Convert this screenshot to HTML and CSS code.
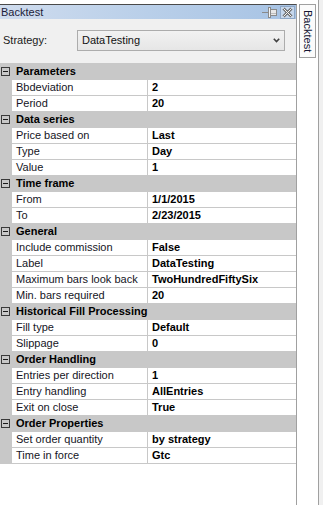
FILE: index.html
```html
<!DOCTYPE html>
<html>
<head>
<meta charset="utf-8">
<link rel="stylesheet" href="styles.css">
</head>
<body>
<div class="app">
  <div class="panel">
    <div class="titlebar">
      <span class="title">Backtest</span>
      <svg class="pin" width="15" height="11" viewBox="0 0 15 11">
        <line x1="0" y1="5.5" x2="6" y2="5.5" stroke="#8a8a8a" stroke-width="1"/>
        <rect x="6.5" y="0.5" width="2" height="10" fill="#f4f4f4" stroke="#8a8a8a"/>
        <rect x="8.5" y="2.5" width="6" height="6" fill="#e8e8e8" stroke="#8a8a8a"/>
        <line x1="9" y1="6.5" x2="14" y2="6.5" stroke="#bdbdbd"/>
      </svg>
      <div class="close">
        <svg width="13" height="11" viewBox="0 0 13 11">
          <line x1="2.5" y1="1.5" x2="10.5" y2="9.5" stroke="#707070" stroke-width="3"/>
          <line x1="10.5" y1="1.5" x2="2.5" y2="9.5" stroke="#707070" stroke-width="3"/>
          <line x1="2.5" y1="1.5" x2="10.5" y2="9.5" stroke="#f4f4f4" stroke-width="1"/>
          <line x1="10.5" y1="1.5" x2="2.5" y2="9.5" stroke="#f4f4f4" stroke-width="1"/>
        </svg>
      </div>
    </div>
    <div class="strategy">
      <span class="label">Strategy:</span>
      <div class="combo">
        <span>DataTesting</span>
        <svg class="chev" width="7" height="5" viewBox="0 0 7 5">
          <path d="M0.8 0.8 L3.5 3.6 L6.2 0.8" fill="none" stroke="#404040" stroke-width="1.6"/>
        </svg>
      </div>
    </div>
    <div class="grid">
      <div class="cat"><span class="tog"></span>Parameters</div>
      <div class="prop"><span class="name">Bbdeviation</span><span class="val">2</span></div>
      <div class="prop"><span class="name">Period</span><span class="val">20</span></div>
      <div class="cat"><span class="tog"></span>Data series</div>
      <div class="prop"><span class="name">Price based on</span><span class="val">Last</span></div>
      <div class="prop"><span class="name">Type</span><span class="val">Day</span></div>
      <div class="prop"><span class="name">Value</span><span class="val">1</span></div>
      <div class="cat"><span class="tog"></span>Time frame</div>
      <div class="prop"><span class="name">From</span><span class="val">1/1/2015</span></div>
      <div class="prop"><span class="name">To</span><span class="val">2/23/2015</span></div>
      <div class="cat"><span class="tog"></span>General</div>
      <div class="prop"><span class="name">Include commission</span><span class="val">False</span></div>
      <div class="prop"><span class="name">Label</span><span class="val">DataTesting</span></div>
      <div class="prop"><span class="name">Maximum bars look back</span><span class="val">TwoHundredFiftySix</span></div>
      <div class="prop"><span class="name">Min. bars required</span><span class="val">20</span></div>
      <div class="cat"><span class="tog"></span>Historical Fill Processing</div>
      <div class="prop"><span class="name">Fill type</span><span class="val">Default</span></div>
      <div class="prop"><span class="name">Slippage</span><span class="val">0</span></div>
      <div class="cat"><span class="tog"></span>Order Handling</div>
      <div class="prop"><span class="name">Entries per direction</span><span class="val">1</span></div>
      <div class="prop"><span class="name">Entry handling</span><span class="val">AllEntries</span></div>
      <div class="prop"><span class="name">Exit on close</span><span class="val">True</span></div>
      <div class="cat"><span class="tog"></span>Order Properties</div>
      <div class="prop"><span class="name">Set order quantity</span><span class="val">by strategy</span></div>
      <div class="prop"><span class="name">Time in force</span><span class="val">Gtc</span></div>
    </div>
  </div>
  <div class="side">
    <div class="tab"><span>Backtest</span></div>
  </div>
  <div class="edge"></div>
</div>
</body>
</html>
```

FILE: styles.css
```css
html, body {
  margin: 0;
  padding: 0;
}
body {
  background: #ffffff;
  font-family: "Liberation Sans", Arial, sans-serif;
  font-size: 11px;
  color: #111;
}
.app {
  display: flex;
  height: 505px;
  overflow: hidden;
}
.panel {
  width: 296px;
  margin-top: 4px;
  border-top: 1px solid #4a4a4a;
  border-right: 1px solid #a0a0a0;
  display: flex;
  flex-direction: column;
  background: #ffffff;
}
.titlebar {
  height: 14px;
  display: flex;
  align-items: center;
  padding-left: 1px;
  background: linear-gradient(to right, #cfdcee, #b9cfe9 50%, #a7c3e4);
}
.title {
  color: #1c1c3a;
  line-height: 14px;
}
.pin {
  margin-left: auto;
  margin-top: 1px;
}
.close {
  width: 13px;
  height: 11px;
  margin-left: 3px;
  margin-right: 1px;
  margin-top: 1px;
  border: 1px solid #8ea7c6;
  background: #c6d7ec;
  display: flex;
}
.strategy {
  height: 44px;
  box-sizing: border-box;
  background: #f0f0f0;
  display: flex;
  align-items: center;
  padding: 0 0 2px 3px;
}
.label {
  width: 74px;
  color: #1a1a1a;
}
.combo {
  width: 202px;
  height: 19px;
  border: 1px solid #acacac;
  background: linear-gradient(#f2f2f2, #e6e6e6);
  display: flex;
  align-items: center;
  padding-left: 4px;
  box-sizing: content-box;
}
.combo span {
  color: #111;
}
.chev {
  margin-left: auto;
  margin-right: 4px;
}
.grid {
  display: flex;
  flex-direction: column;
  border-bottom: 1px solid #c8c8c8;
}
.cat {
  height: 16px;
  box-sizing: border-box;
  background: #c8c8c8;
  display: flex;
  align-items: center;
  font-weight: bold;
  color: #000;
}
.tog {
  width: 7px;
  height: 7px;
  border: 1px solid #3a3a3a;
  margin-left: 1px;
  margin-right: 6px;
  position: relative;
}
.tog::after {
  content: "";
  position: absolute;
  left: 1px;
  right: 1px;
  top: 3px;
  height: 1px;
  background: #1a1a1a;
}
.prop {
  height: 16px;
  box-sizing: border-box;
  padding-top: 1px;
  padding-left: 12px;
  background: #c8c8c8;
  display: flex;
}
.name {
  width: 135px;
  box-sizing: border-box;
  padding-left: 4px;
  background: #ffffff;
  line-height: 15px;
  color: #151525;
  white-space: nowrap;
}
.val {
  flex: 1;
  margin-left: 1px;
  padding-left: 4px;
  background: #ffffff;
  line-height: 15px;
  font-weight: bold;
  color: #000;
  white-space: nowrap;
}
.side {
  width: 21px;
  padding-top: 4px;
  background: #ffffff;
}
.tab {
  margin-left: 2px;
  width: 17px;
  height: 52px;
  border: 1px solid #a0a0a0;
  background: #fbfbfb;
  display: flex;
  justify-content: center;
  padding-top: 5px;
  box-sizing: border-box;
  height: 54px;
}
.tab span {
  writing-mode: vertical-rl;
  color: #141432;
  line-height: 11px;
}
.edge {
  flex: 1;
  border-left: 1px solid #a0a0a0;
  background: #f0f0f0;
}
```
